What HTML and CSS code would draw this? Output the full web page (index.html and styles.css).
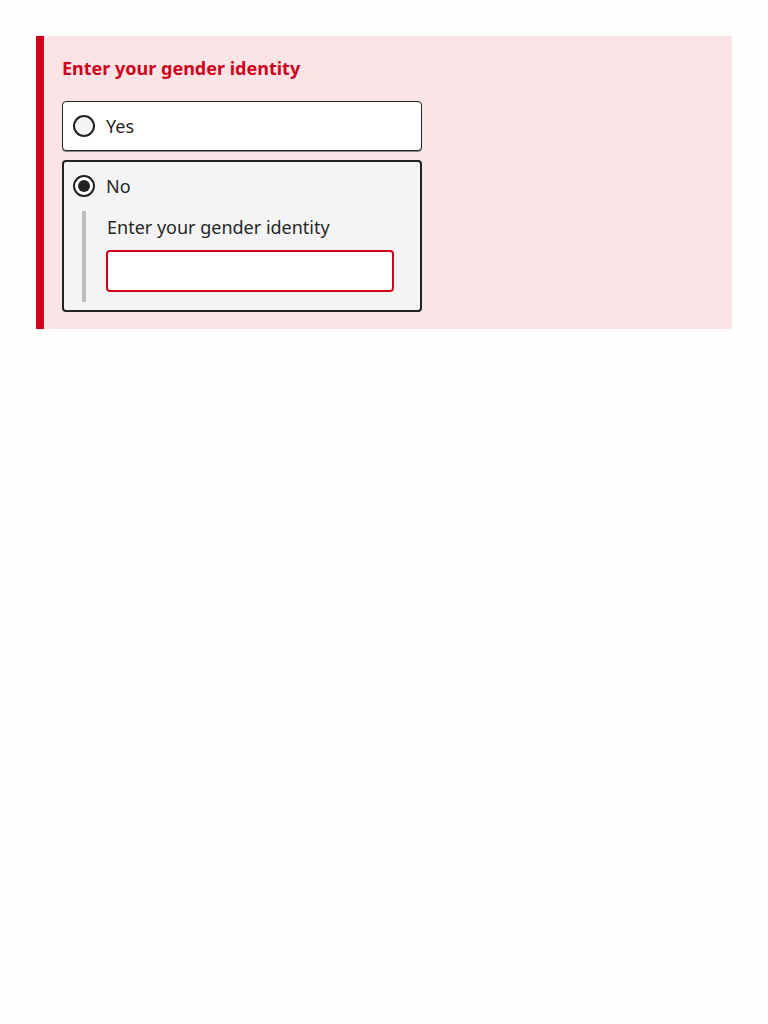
FILE: index.html
```html
<!DOCTYPE html>
<html lang="en">
<head>
<meta charset="utf-8">
<title>Gender identity</title>
<link rel="stylesheet" href="styles.css">
</head>
<body>
<div class="error-panel">
  <p class="error-title">Enter your gender identity</p>
  <div class="options">
    <label class="option">
      <span class="radio"></span>
      <span class="option-text">Yes</span>
    </label>
    <div class="option option-selected">
      <label class="option-row">
        <span class="radio radio-checked"></span>
        <span class="option-text">No</span>
      </label>
      <div class="conditional">
        <div class="field-label">Enter your gender identity</div>
        <input class="text-input" type="text" aria-label="Enter your gender identity">
      </div>
    </div>
  </div>
</div>
</body>
</html>
```
FILE: styles.css
```css
html, body {
  margin: 0;
  padding: 0;
  background: #fefefe;
}
body {
  padding: 36px;
  font-family: "Noto Sans", "Open Sans", sans-serif;
  color: #262626;
}
.error-panel {
  border-left: 8px solid #d0021b;
  background: #fae4e6;
  padding: 19px 18px 17px 18px;
}
.error-title {
  margin: 0 0 19px 0;
  font-size: 18px;
  line-height: 27px;
  font-weight: 700;
  color: #d0021b;
}
.options {
  display: flex;
  flex-direction: column;
  gap: 9px;
  width: 360px;
}
.option {
  display: flex;
  align-items: center;
  gap: 11px;
  box-sizing: border-box;
  background: #ffffff;
  border: 1px solid #222222;
  border-radius: 4px;
  box-shadow: 0 1px 0 #8a8a8a;
  padding: 12px 10px;
}
.option-selected {
  display: block;
  background: #f4f4f4;
  border: 2px solid #222222;
  box-shadow: none;
  padding: 12px 9px 8px 9px;
}
.option-row {
  display: flex;
  align-items: center;
  gap: 11px;
}
.radio {
  box-sizing: border-box;
  width: 22px;
  height: 22px;
  flex: none;
  border: 2px solid #222222;
  border-radius: 50%;
  background: #f3f3f3;
  position: relative;
}
.radio-checked {
  background: #ffffff;
}
.radio-checked::after {
  content: "";
  position: absolute;
  left: 3px;
  top: 3px;
  width: 12px;
  height: 12px;
  border-radius: 50%;
  background: #222222;
}
.option-text {
  font-size: 18px;
  line-height: 24px;
}
.conditional {
  margin: 13px 0 0 9px;
  border-left: 4px solid #bdbdbd;
  padding: 4px 0 10px 21px;
}
.field-label {
  font-size: 18px;
  line-height: 24px;
  margin-bottom: 11px;
}
.text-input {
  display: block;
  box-sizing: border-box;
  width: 288px;
  height: 42px;
  margin-left: -1px;
  border: 2px solid #d0021b;
  border-radius: 4px;
  background: #ffffff;
  font-family: inherit;
  font-size: 18px;
  padding: 0 8px;
  outline: none;
}
```
